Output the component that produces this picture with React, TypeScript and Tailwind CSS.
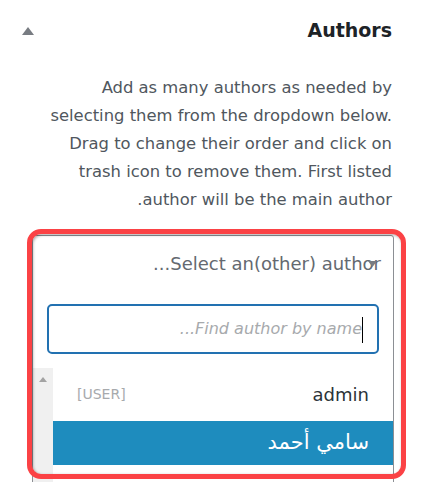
import React from "react";

export default function App() {
  return (
    <div
      dir="rtl"
      className="relative w-[426px] h-[482px] overflow-hidden bg-white"
      style={{ fontFamily: "Tahoma, 'DejaVu Sans', sans-serif" }}
    >
      {/* header */}
      <div className="flex items-center justify-between pr-[34px] pl-[22px] pt-[16px] h-[44px]">
        <div className="text-[19px] font-bold text-[#1d2327] leading-none">Authors</div>
        <svg width="12" height="8" viewBox="0 0 12 8" className="mt-[2px]">
          <polygon points="6,0 12,8 0,8" fill="#787c82" />
        </svg>
      </div>

      {/* description */}
      <div className="pr-[34px] pl-[20px] mt-[30px] text-[16.4px] leading-[28px] text-[#50575e] text-right whitespace-nowrap">
        <div>Add as many authors as needed by</div>
        <div>
          <span dir="ltr">selecting them from the dropdown below.</span>
        </div>
        <div>Drag to change their order and click on</div>
        <div>trash icon to remove them. First listed</div>
        <div>author will be the main author.</div>
      </div>

      {/* select box */}
      <div className="absolute left-[32px] top-[235px] w-[362px] h-[260px] border border-[#8c8f94] rounded-[3px] bg-white">
        <div className="relative h-[55px] flex items-center pr-[12px] text-[18px] text-[#646970]">
          Select an(other) author...
          <svg width="9" height="6" viewBox="0 0 9 6" className="absolute left-[335px] top-[25px]">
            <polygon points="0,0 9,0 4.5,6" fill="#787c82" />
          </svg>
        </div>
        <div className="px-[14px] pt-[13px]">
          <div className="relative h-[50px] border-2 border-[#2271b1] rounded-[5px] flex items-center pr-[15px]">
            <span className="italic text-[16px] text-[#a7aaad]">Find author by name...</span>
            <span className="absolute right-[14px] top-[11px] w-px h-[26px] bg-black"></span>
          </div>
        </div>
        <div className="flex mt-[14px]">
          <div className="flex-1">
            <div className="h-[53px] flex items-center justify-between pr-[24px] pl-[24px]">
              <span className="text-[18px] text-[#2c3338]">admin</span>
              <span className="text-[14px] text-[#a7aaad]">[USER]</span>
            </div>
            <div className="h-[44px] bg-[#1e8cbe] flex items-center pr-[24px]">
              <span className="text-[21px] text-white" style={{ fontFamily: "Tahoma, 'DejaVu Sans', 'Noto Sans', sans-serif" }}>
                سامي أحمد
              </span>
            </div>
          </div>
          <div className="w-[20px] h-[120px] bg-[#f0f0f0] flex justify-center pt-[9px]">
            <svg width="8" height="5" viewBox="0 0 8 5">
              <polygon points="4,0 8,5 0,5" fill="#a3a3a3" />
            </svg>
          </div>
        </div>
      </div>

      {/* red highlight annotation */}
      <div className="absolute left-[27px] top-[229px] w-[379px] h-[250px] border-[5px] border-[#fb4245] rounded-[14px] shadow-[inset_1px_1px_3px_rgba(0,0,0,0.35)] pointer-events-none"></div>
    </div>
  );
}
